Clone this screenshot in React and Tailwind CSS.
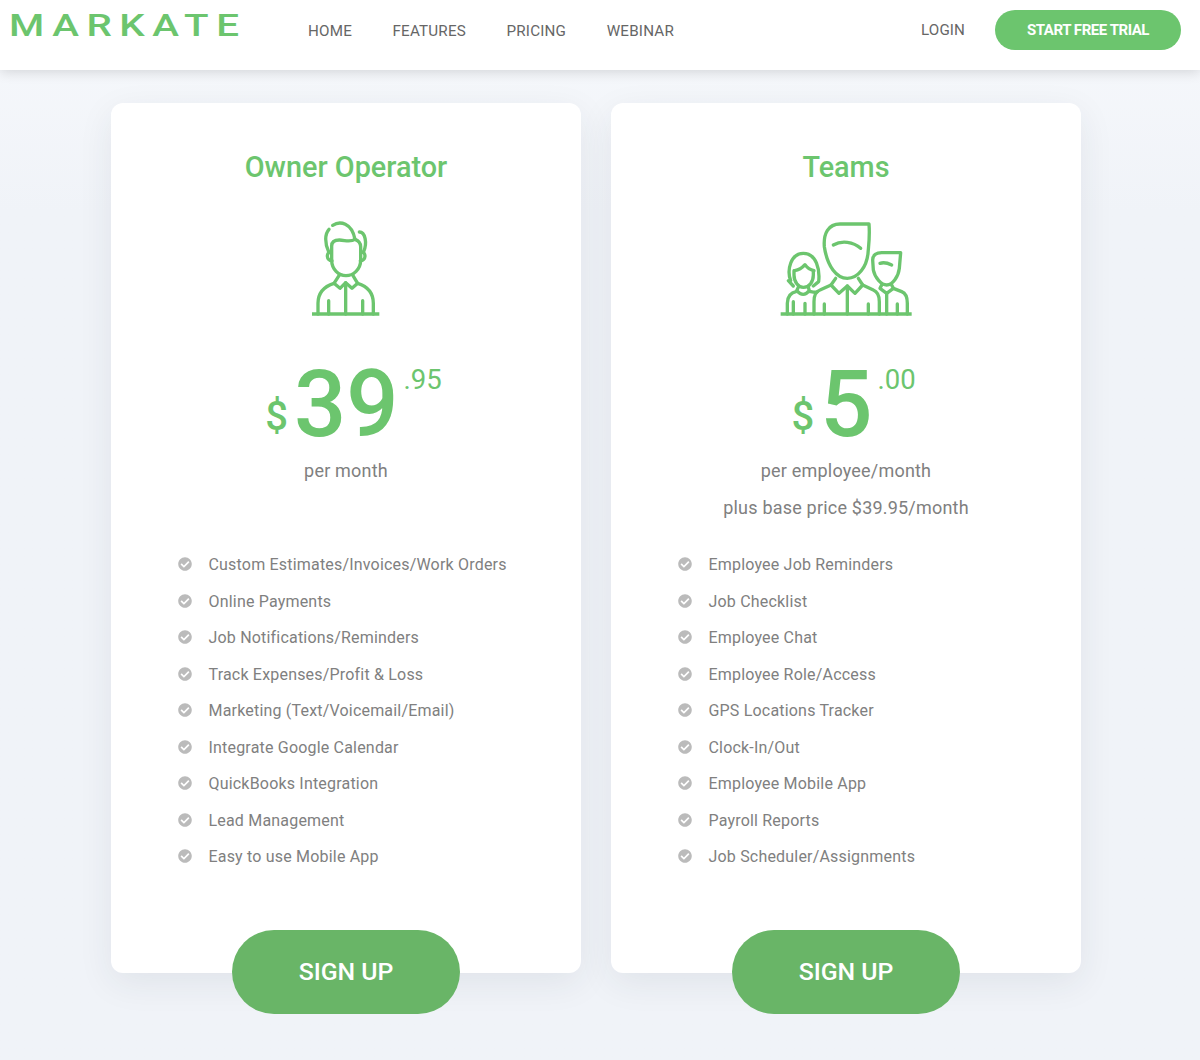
import { FaCheckCircle } from 'react-icons/fa';

const plans = [
  {
    title: 'Owner Operator',
    dollars: '39',
    cents: '.95',
    notes: ['per month'],
    icon: 'single',
    features: [
      'Custom Estimates/Invoices/Work Orders',
      'Online Payments',
      'Job Notifications/Reminders',
      'Track Expenses/Profit & Loss',
      'Marketing (Text/Voicemail/Email)',
      'Integrate Google Calendar',
      'QuickBooks Integration',
      'Lead Management',
      'Easy to use Mobile App',
    ],
  },
  {
    title: 'Teams',
    dollars: '5',
    cents: '.00',
    notes: ['per employee/month', 'plus base price $39.95/month'],
    icon: 'team',
    features: [
      'Employee Job Reminders',
      'Job Checklist',
      'Employee Chat',
      'Employee Role/Access',
      'GPS Locations Tracker',
      'Clock-In/Out',
      'Employee Mobile App',
      'Payroll Reports',
      'Job Scheduler/Assignments',
    ],
  },
];

function SingleIcon() {
  return (
    <svg width="110" height="115" viewBox="0 0 330 345" fill="none" stroke="#6cc56e" strokeWidth="10" strokeLinecap="round" strokeLinejoin="round">
      <path d="M66 312H268" strokeLinecap="butt" />
      <path d="M125 108C125 95 135 90 148 90C165 90 180 98 195 88C205 92 212 100 212 110V150C212 178 190 197 168 197C146 197 125 178 125 150Z" />
      <path d="M128 46C150 32 185 38 195 88" />
      <path d="M117 58C104 72 104 100 116 125" />
      <path d="M208 66C226 66 232 100 221 125" />
      <path d="M123 126C108 126 108 152 126 152" />
      <path d="M214 126C229 126 229 152 211 152" />
      <path d="M147 197L132 220L150 235L167 218L186 235L203 220L189 197" />
      <path d="M132 220C100 230 84 250 84 280V312" />
      <path d="M203 220C235 230 250 250 250 280V312" />
      <path d="M167 218V312M116 272V312M218 272V312" />
    </svg>
  );
}

function TeamIcon() {
  return (
    <svg width="150" height="115" viewBox="0 0 450 345" fill="none" stroke="#6cc56e" strokeWidth="10" strokeLinecap="round" strokeLinejoin="round">
      <path d="M32 312H425" strokeLinecap="butt" />
      <path d="M163 110C160 70 175 42 210 42H297C300 80 296 105 294 130C290 170 265 205 232 205C200 205 172 170 163 110Z" />
      <path d="M190 105C215 90 250 95 272 115" />
      <path d="M197 205L183 225L207 250L232 228L255 250L278 225L265 205" />
      <path d="M183 225L150 240C135 245 132 260 132 275V312" />
      <path d="M278 225L310 240C322 245 328 260 328 275V312" />
      <path d="M232 228V312M163 282V312M295 282V312" />
      <path d="M62 212C50 180 62 130 100 130C140 130 150 180 146 215L130 228" />
      <path d="M55 212L70 228" />
      <path d="M74 182C88 180 98 172 105 164C112 174 122 180 132 182" />
      <path d="M72 182V195C72 215 85 232 100 232C118 232 130 215 130 195V182" />
      <path d="M85 232L80 242Q100 264 118 242L115 232" />
      <path d="M80 244C60 248 52 260 52 280V312M70 275V312M118 244C128 246 134 248 142 246M105 280V312" />
      <path d="M308 150C308 135 320 128 335 128H392L388 175C385 200 368 225 350 225C335 225 315 205 310 180Z" />
      <path d="M330 160Q345 155 365 165" />
      <path d="M335 225L330 235L350 250L370 235L365 225" />
      <path d="M370 235L395 245C408 250 412 262 412 280V312M350 250V312M382 282V312" />
    </svg>
  );
}

function PlanCard({ plan }) {
  return (
    <div className="w-[470px] h-[870px] bg-white rounded-xl shadow-[0_10px_35px_rgba(40,50,70,0.08)] flex flex-col items-center">
      <h2 className="mt-[46px] text-[28.8px] leading-[36px] font-medium text-[#6cc56e]">{plan.title}</h2>
      <div className="mt-[25px] h-[115px] mr-[2px]">{plan.icon === 'single' ? <SingleIcon /> : <TeamIcon />}</div>
      <div className="mt-[34px] h-[90px] pl-[15px] flex items-start text-[#6cc56e]">
        <span className="mt-[33px] mr-[6px] text-[40px] leading-[50px] font-medium">$</span>
        <span className="mt-[1px] text-[92px] leading-[90px] font-medium">{plan.dollars}</span>
        <span className="mt-[5px] ml-[5px] text-[27.5px] leading-[32px]">{plan.cents}</span>
      </div>
      <div className="mt-[4px] h-[85px] text-center text-lg leading-[36.5px] text-[#808080] tracking-[0.2px]">
        {plan.notes.map((note) => (
          <p key={note}>{note}</p>
        ))}
      </div>
      <ul className="mt-[9px] w-full pl-[67px] text-base tracking-[0.19px] text-[#808080]">
        {plan.features.map((feature) => (
          <li key={feature} className="h-[36.5px] flex items-center">
            <FaCheckCircle className="w-[14px] h-[14px] mr-[16.5px] -translate-y-px text-[#bbbbbb]" />
            {feature}
          </li>
        ))}
      </ul>
      <button className="mt-auto -mb-[41px] w-[228px] h-[84px] rounded-full bg-[#69b567] text-white text-[24.8px] font-medium">
        SIGN UP
      </button>
    </div>
  );
}

export default function App() {
  return (
    <div className="min-h-[1060px] bg-gradient-to-b from-[#f7f9fc] to-[#f0f3f8] to-20% font-['Roboto',sans-serif]">
      <header className="h-[70px] bg-white shadow-[0_2px_12px_rgba(0,0,0,0.14)] flex items-start">
        <a className="ml-[9px] mt-[8px] w-[282px] origin-left scale-x-[1.3] text-[31px] leading-[36px] font-medium tracking-[5.8px] text-[#6cc56e]">MARKATE</a>
        <nav className="ml-[17px] mt-[21px] flex gap-[40.5px] text-[15.2px] leading-[20px] tracking-[0.2px] text-[#666666]">
          <a>HOME</a>
          <a>FEATURES</a>
          <a>PRICING</a>
          <a>WEBINAR</a>
        </nav>
        <a className="ml-auto mt-[20px] text-[15.2px] leading-[20px] tracking-[0.1px] text-[#666666]">LOGIN</a>
        <button className="ml-[30px] mr-[19px] mt-[10px] w-[186px] h-[40px] rounded-full bg-[#6cc56e] text-white text-[15px] font-bold tracking-[-0.45px]">
          START FREE TRIAL
        </button>
      </header>
      <main className="pt-[33px] pl-[111px] flex gap-[30px]">
        {plans.map((plan) => (
          <PlanCard key={plan.title} plan={plan} />
        ))}
      </main>
    </div>
  );
}
